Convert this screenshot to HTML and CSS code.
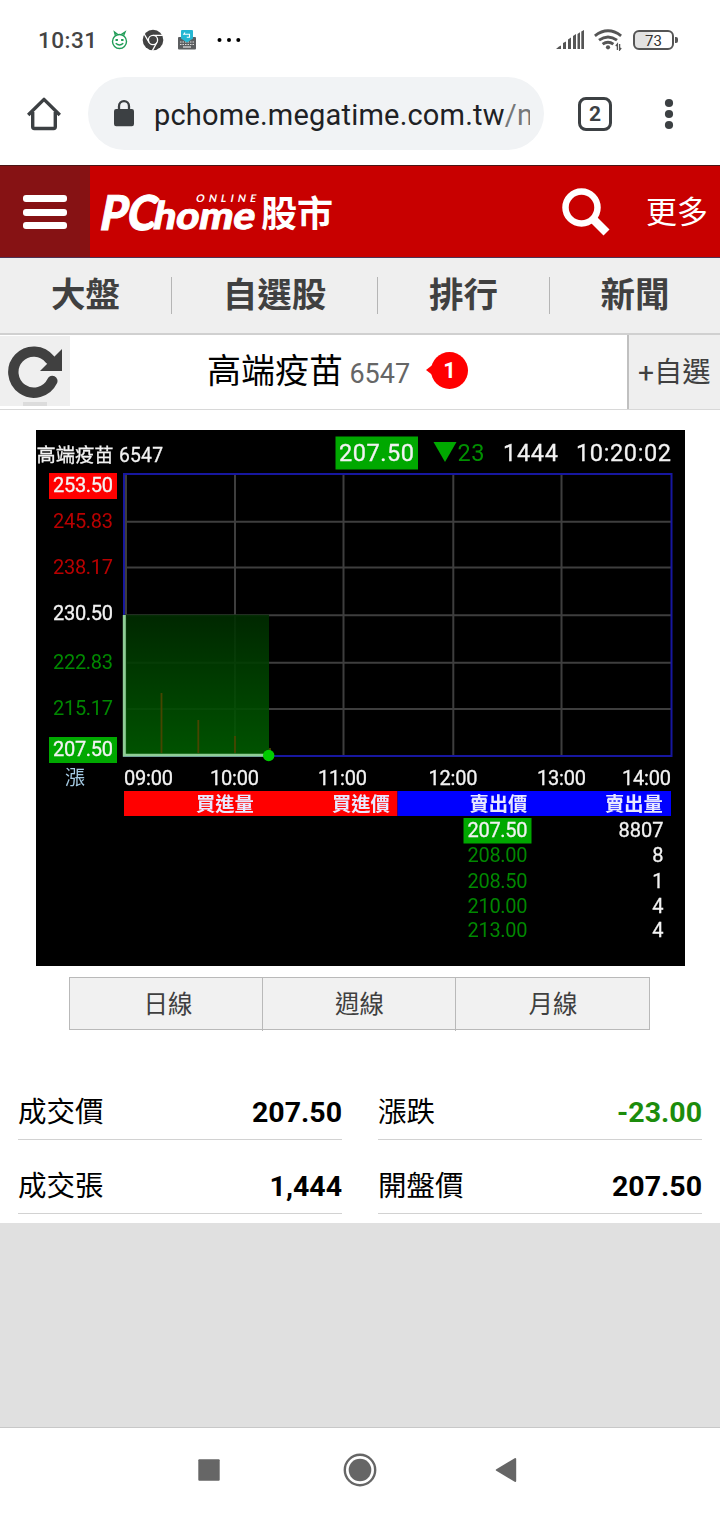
FILE: index.html
```html
<!DOCTYPE html>
<html lang="zh-Hant">
<head>
<meta charset="utf-8">
<title>高端疫苗 6547</title>
<link rel="stylesheet" href="styles.css">
</head>
<body>
<div class="status">
  <span class="clock">10:31</span>
  <svg class="i-face" width="18" height="20" viewBox="0 0 18 20" fill="none" stroke="#1f9d57" stroke-width="1.400"><circle cx="8.500" cy="11.500" r="7"/><path d="M4.400 5.500 3.500 2 6.800 4.500M12.600 5.500 14 2 10.200 4.500M4.700 13.300q3.800 3.400 7.600 0"/><path d="M4.500 10h2.400M10.100 10h2.400" stroke-width="2"/></svg>
  <svg class="i-chrome" width="22" height="22" viewBox="0 0 22 22"><circle cx="11" cy="11" r="10.300" fill="#424242"/><g fill="none" stroke="#fff" stroke-width="1.300"><circle cx="11" cy="11" r="4.600"/><path d="M11 6.400h9.800M7 13.300 2.200 5M15 13.300l-4.600 8.300"/></g></svg>
  <svg class="i-keys" width="18" height="20" viewBox="0 0 18 20"><rect x="0" y="7" width="18" height="12.500" rx="1" fill="#5c5e60"/><path d="M2 12h14M2 14.500h14" stroke="#ddd" stroke-width="1.200" stroke-dasharray="1.500 1"/><path d="M5 17h8" stroke="#e4e4e4" stroke-width="1.200"/><path d="M3 1q0-1 1-1h10q1 0 1 1v7.500l-6 4-6-4z" fill="#25b7d3"/><path d="M7 2.500 5.800 4.200h5.700v3H8.800" fill="none" stroke="#fff" stroke-width="1.100"/></svg>
  <svg class="i-dots" width="24" height="6" viewBox="0 0 24 6"><circle cx="2.500" cy="3" r="2"/><circle cx="12" cy="3" r="2"/><circle cx="21.300" cy="3" r="2"/></svg>
  <svg class="i-signal" width="28" height="20" viewBox="0 0 28 20" fill="#555"><path d="M0 19l3-2.500 2-1V19zM7 19v-6l3-1.600V19zM12 19V9.400l3-1.800V19zM17 19V6l3-2v15zM21.500 19V4l2.500-1.800V19zM25.300 19V1.500L28 0v19z"/></svg>
  <svg class="i-wifi" width="28" height="22" viewBox="0 0 28 22" fill="none" stroke="#555" stroke-width="2.900"><path d="M.9 6.800Q14 -3.200 27.100 6.800M5 11.200q9-6.600 18 0M8.600 15.200q5.400-4 10.800 0"/><circle cx="14" cy="18.300" r="2.100" fill="#555" stroke="none"/><path d="M23.400 21v-6l-1.600 2M25.600 15v6l1.600-2" stroke-width="1.300"/></svg>
  <span class="battery">73</span><i class="battery-tip"></i>
</div>

<div class="toolbar">
  <svg class="i-home" width="34" height="34" viewBox="0 0 34 34" fill="none" stroke="#3c4043" stroke-width="3.400" stroke-linejoin="round"><path d="M1.200 18 17 2.400 32.800 18"/><path d="M5.700 15v14.800q0 1.700 1.700 1.700h19.200q1.700 0 1.700-1.700V15"/></svg>
  <div class="omnibox">
    <svg width="20" height="27" viewBox="0 0 20 27"><rect x="0" y="9" width="20" height="17.300" rx="2.200" fill="#3c4043"/><path d="M5 10V6.200a5 5 0 0 1 10 0V10" fill="none" stroke="#3c4043" stroke-width="2.300"/></svg>
    <span class="url">pchome.megatime.com.tw<span class="path">/n</span></span>
  </div>
  <span class="tabs-count">2</span>
  <svg class="i-menu" width="10" height="32" viewBox="0 0 10 32" fill="#3c4043"><circle cx="5" cy="5" r="4.100"/><circle cx="5" cy="16" r="4.100"/><circle cx="5" cy="27" r="4.100"/></svg>
</div>

<header class="brand">
  <div class="burger"><i></i><i></i><i></i></div>
  <svg class="logo" width="240" height="50" viewBox="96 188 240 50" fill="#fff">
    <g class="wordmark">
      <text transform="translate(98 229.500) skewX(-11)" font-size="48" textLength="56" lengthAdjust="spacingAndGlyphs">PC</text>
      <text transform="translate(151.500 229) skewX(-11)" font-size="38" textLength="101.500" lengthAdjust="spacingAndGlyphs">home</text>
      <text class="online" transform="translate(195.500 202) skewX(-11)" font-size="10.500" textLength="60">ONLINE</text>
    </g>
    <text x="261" y="227" font-family="Noto Sans CJK TC, sans-serif" font-weight="700" font-size="36" textLength="72">股市</text>
  </svg>
  <svg class="i-search" width="48" height="48" viewBox="0 0 48 48" fill="none" stroke="#fff"><circle cx="19.500" cy="19.500" r="16" stroke-width="6.500"/><path d="M30.500 30.500 44.500 44.500" stroke-width="8.500"/></svg>
  <span class="more">更多</span>
</header>

<nav class="menu">
  <a class="m1">大盤</a><a class="m2">自選股</a><a class="m3">排行</a><a class="m4">新聞</a>
</nav>

<section class="stock">
  <div class="refresh">
    <svg width="56" height="54" viewBox="0 0 56 54"><path d="M44.300 36A20.500 20.500 0 1 1 42 14.500" fill="none" stroke="#404040" stroke-width="10.400" stroke-linecap="round"/><path d="M54 4v22H32z" fill="#404040"/></svg>
    <i></i>
  </div>
  <h1 class="name">高端疫苗 <small>6547</small></h1>
  <span class="badge">1</span>
  <span class="add">+自選</span>
</section>

<svg class="chart" width="649" height="536" viewBox="36 430 649 536">
  <defs><linearGradient id="area" x1="0" y1="0" x2="0" y2="1"><stop offset="0" stop-color="#002c00" stop-opacity=".9"/><stop offset="1" stop-color="#005c00" stop-opacity=".9"/></linearGradient></defs>
  <rect x="36" y="430" width="649" height="536"/>
  <g class="grid"><path d="M126 474V756M235 474V756M343.500 474V756M453.300 474V756M561.500 474V756M124 521.700H671M124 567.500H671M124 615.300H671M124 662.700H671M124 709H671"/></g>
  <rect x="124" y="474" width="547.500" height="282" fill="none" stroke="#1717a0" stroke-width="2"/>
  <rect x="124" y="614.700" width="145" height="141" fill="url(#area)"/>
  <path d="M161.500 693v60M198.300 720v33M235 736v17M270 748v3" stroke="#484500" stroke-width="1.800"/>
  <path d="M124.300 615V755.300H269" fill="none" stroke="#8fce96" stroke-width="3"/>
  <circle cx="268.700" cy="755.500" r="5.700" fill="#00cc00"/>
  <text class="w" x="36.500" y="461.700" font-size="19.300" textLength="77">高端疫苗</text>
  <text class="w" x="119" y="461.700" font-size="19.300" textLength="44">6547</text>
  <g class="top">
    <rect x="335.500" y="436.500" width="82.500" height="33" fill="#00a800"/>
    <text class="w" x="339" y="460.500" textLength="75">207.50</text>
    <path d="M433.500 442h23L445 462z" fill="#00a800"/>
    <text fill="#009000" x="457.500" y="460.500" textLength="27">23</text>
    <text class="w" x="503" y="460.500" textLength="55">1444</text>
    <text class="w" x="576" y="460.500" textLength="95">10:20:02</text>
  </g>
  <g class="axis">
    <rect x="49" y="473" width="68" height="26" fill="#f00"/><rect x="49" y="737" width="68" height="26" fill="#00a800"/>
    <text class="w" x="53" y="491.700" textLength="60">253.50</text>
    <text class="r" x="53" y="528" textLength="60">245.83</text>
    <text class="r" x="53" y="574.300" textLength="60">238.17</text>
    <text class="w" x="53" y="620" textLength="60">230.50</text>
    <text class="g" x="53" y="669.300" textLength="60">222.83</text>
    <text class="g" x="53" y="715.300" textLength="60">215.17</text>
    <text class="w" x="53" y="755.700" textLength="60">207.50</text>
    <text x="65" y="785" fill="#a5cbe4">漲</text>
    <text class="w" x="124" y="785" textLength="49">09:00</text>
    <text class="w" x="210" y="785" textLength="49">10:00</text>
    <text class="w" x="318" y="785" textLength="49">11:00</text>
    <text class="w" x="428.500" y="785" textLength="49">12:00</text>
    <text class="w" x="537" y="785" textLength="49">13:00</text>
    <text class="w" x="622" y="785" textLength="49">14:00</text>
  </g>
  <rect x="124" y="791" width="273.500" height="25" fill="#f00"/><rect x="397.500" y="791" width="273.500" height="25" fill="#00f"/>
  <g class="heads"><text x="196" y="810.500">買進量</text><text x="332" y="810.500">買進價</text><text x="469.500" y="810.500">賣出價</text><text x="605" y="810.500">賣出量</text></g>
  <g class="axis">
    <rect x="463.500" y="818" width="68" height="25.500" fill="#00a800"/>
    <text class="w" x="467.500" y="836.500" textLength="60">207.50</text>
    <text class="g" x="467.500" y="862" textLength="60">208.00</text>
    <text class="g" x="467.500" y="888" textLength="60">208.50</text>
    <text class="g" x="467.500" y="913" textLength="60">210.00</text>
    <text class="g" x="467.500" y="937" textLength="60">213.00</text>
    <g text-anchor="end"><text class="w" x="663.500" y="836.500">8807</text><text class="w" x="663.500" y="862">8</text><text class="w" x="663.500" y="888">1</text><text class="w" x="663.500" y="913">4</text><text class="w" x="663.500" y="937">4</text></g>
  </g>
</svg>

<div class="periods"><span>日線</span><span>週線</span><span>月線</span></div>

<dl class="quotes">
  <div><dt>成交價</dt><dd>207.50</dd></div>
  <div><dt>漲跌</dt><dd class="down">-23.00</dd></div>
  <div><dt>成交張</dt><dd>1,444</dd></div>
  <div><dt>開盤價</dt><dd>207.50</dd></div>
</dl>

<div class="blank"></div>

<div class="system">
  <svg width="22" height="22" viewBox="0 0 22 22"><rect x=".3" y=".3" width="21.400" height="21.400" rx="1" fill="#666"/></svg>
  <svg width="34" height="34" viewBox="0 0 34 34"><circle cx="17" cy="17" r="15.200" fill="none" stroke="#666" stroke-width="2.400"/><circle cx="17" cy="17" r="11.300" fill="#666"/></svg>
  <svg width="22" height="26" viewBox="0 0 22 26"><path d="M1.800 13 20.200 2v22z" fill="#666" stroke="#666" stroke-width="2" stroke-linejoin="round"/></svg>
</div>
</body>
</html>
```

FILE: styles.css
```css
* { box-sizing: border-box; }
body { margin: 0; width: 720px; height: 1513px; overflow: hidden; background: #fff; font-family: Roboto, "Noto Sans CJK TC", sans-serif; color: #000; }
svg { display: block; flex: none; }

.status { display: flex; align-items: center; height: 77px; padding: 3px 0 0 38px; }
.clock { width: 73px; font-size: 22.500px; font-weight: 500; letter-spacing: .5px; color: #444; }
.i-chrome { margin-left: 13px; }
.i-keys { margin-left: 14px; }
.i-dots { margin-left: 21px; }
.i-signal { margin-left: 315px; }
.i-wifi { margin-left: 10px; }
.battery { margin-left: 11px; width: 41px; height: 20px; border: 2.500px solid #555; border-radius: 6px; background: linear-gradient(90deg, #e2e2e2 32%, #fff 60%); font-size: 15px; line-height: 18px; text-align: center; color: #333; }
.battery-tip { width: 3px; height: 6px; margin-left: 1px; border-radius: 0 2px 2px 0; background: #555; }

.toolbar { display: flex; align-items: center; height: 88px; padding: 0 0 15px 27px; }
.omnibox { display: flex; align-items: center; width: 456px; height: 73px; margin-left: 27px; padding-left: 26px; border-radius: 37px; background: #f1f3f5; overflow: hidden; }
.url { margin: 2px 0 0 20px; width: 376px; overflow: hidden; white-space: nowrap; font-size: 29px; letter-spacing: .2px; color: #202124; }
.path { color: #757779; }
.tabs-count { width: 34px; height: 34px; margin-left: 34px; border: 3.500px solid #3c4043; border-radius: 8px; font-size: 21px; font-weight: 700; line-height: 28px; text-align: center; color: #3c4043; }
.i-menu { margin-left: 52px; }

.brand { display: flex; align-items: center; height: 93px; background: #c80000; border-top: 1px solid #4a1515; border-bottom: 1px solid #4d3355; }
.burger { display: flex; flex-direction: column; align-items: center; justify-content: center; gap: 6.500px; width: 90px; height: 91px; padding-top: 1px; background: #861214; }
.burger i { width: 44px; height: 7px; border-radius: 3px; background: #fff; }
.logo { margin: 3px 0 0 6px; overflow: visible; }
.wordmark { font-family: Lato, sans-serif; font-weight: 900; stroke: #fff; stroke-width: 1px; }
.online { font-weight: 700; stroke: none; }
.i-search { margin-left: 226px; }
.more { margin: -5px 0 0 36px; font-size: 31px; color: #fff; white-space: nowrap; }

.menu { display: grid; grid-template-columns: 171px 206px 172px 171px; height: 77px; padding-top: 19px; background: #efefef; border-bottom: 2px solid #d0d0d0; }
.menu a { height: 37px; line-height: 36px; text-align: center; font-size: 34.500px; font-weight: 700; color: #404040; border-left: 1px solid #b5b5b5; }
.menu a:first-child { border-left: 0; }

.stock { display: flex; height: 75px; border-bottom: 1px solid #d8d8d8; }
.refresh { width: 70px; height: 70px; margin-top: 1px; padding: 9px 0 0 8px; background: #efefef; }
.refresh i { display: block; width: 24px; height: 4px; margin: 3px 0 0 15px; background: #dcdcdc; }
.name { margin: 0 0 0 137px; line-height: 72px; font-size: 34px; font-weight: 400; white-space: pre; }
.name small { margin-left: -2px; font-size: 27px; color: #666; }
.badge { position: relative; width: 37px; height: 37px; margin: 17px 0 0 21px; border-radius: 50%; background: #f00; color: #fff; font-size: 22px; font-weight: 700; line-height: 37px; text-align: center; }
.badge::before { content: ""; position: absolute; left: -5px; top: 11px; border: 7px solid transparent; border-left: 0; border-right: 9px solid #f00; }
.add { width: 93px; margin-left: auto; padding-left: 9px; border-left: 2px solid #c0c0c0; background: #efefef; font-size: 28.300px; line-height: 75px; color: #404040; white-space: nowrap; }

.chart { margin: 20px 0 0 36px; filter: blur(.5px); font-family: Roboto, "Noto Sans CJK TC", sans-serif; }
.grid { stroke: #3e3e3e; stroke-width: 2; fill: none; }
.top { font-size: 23.500px; }
.axis { font-size: 20px; }
.w { fill: #f2f2f2; stroke: #f2f2f2; stroke-width: .3px; }
.r { fill: #b80000; }
.g { fill: #008800; }
.heads { font-size: 19.300px; font-weight: 700; fill: #e8e8ff; }

.periods { display: grid; grid-template-columns: 192px 193px 194px; width: 581px; height: 53px; margin: 11px 0 0 69px; border: 1px solid #b9b9b9; background: #f1f1f1; }
.periods span { line-height: 53px; padding-left: 4px; text-align: center; font-size: 24.500px; color: #404040; }
.periods span + span { padding-left: 1px; border-left: 1px solid #b9b9b9; }

.quotes { display: grid; grid-template-columns: 324px 324px; column-gap: 36px; height: 193px; margin: 0; padding: 36px 0 0 18px; align-content: start; }
.quotes div { display: flex; justify-content: space-between; align-items: center; height: 74px; padding-top: 18px; border-bottom: 1px solid #d2d2d2; }
.quotes dt { margin: -4px 0 0; font-size: 28.500px; }
.quotes dd { margin: 1px 0 0; font-size: 28.500px; font-weight: 700; }
.quotes .down { color: #1c8c0c; }

.blank { height: 205px; background: #e0e0e0; border-bottom: 1px solid #c8c8c8; }
.system { display: flex; align-items: center; height: 85px; padding: 0 0 2px 197.500px; }
.system svg:nth-child(2) { margin-left: 123px; }
.system svg:nth-child(3) { margin-left: 118px; }
```
